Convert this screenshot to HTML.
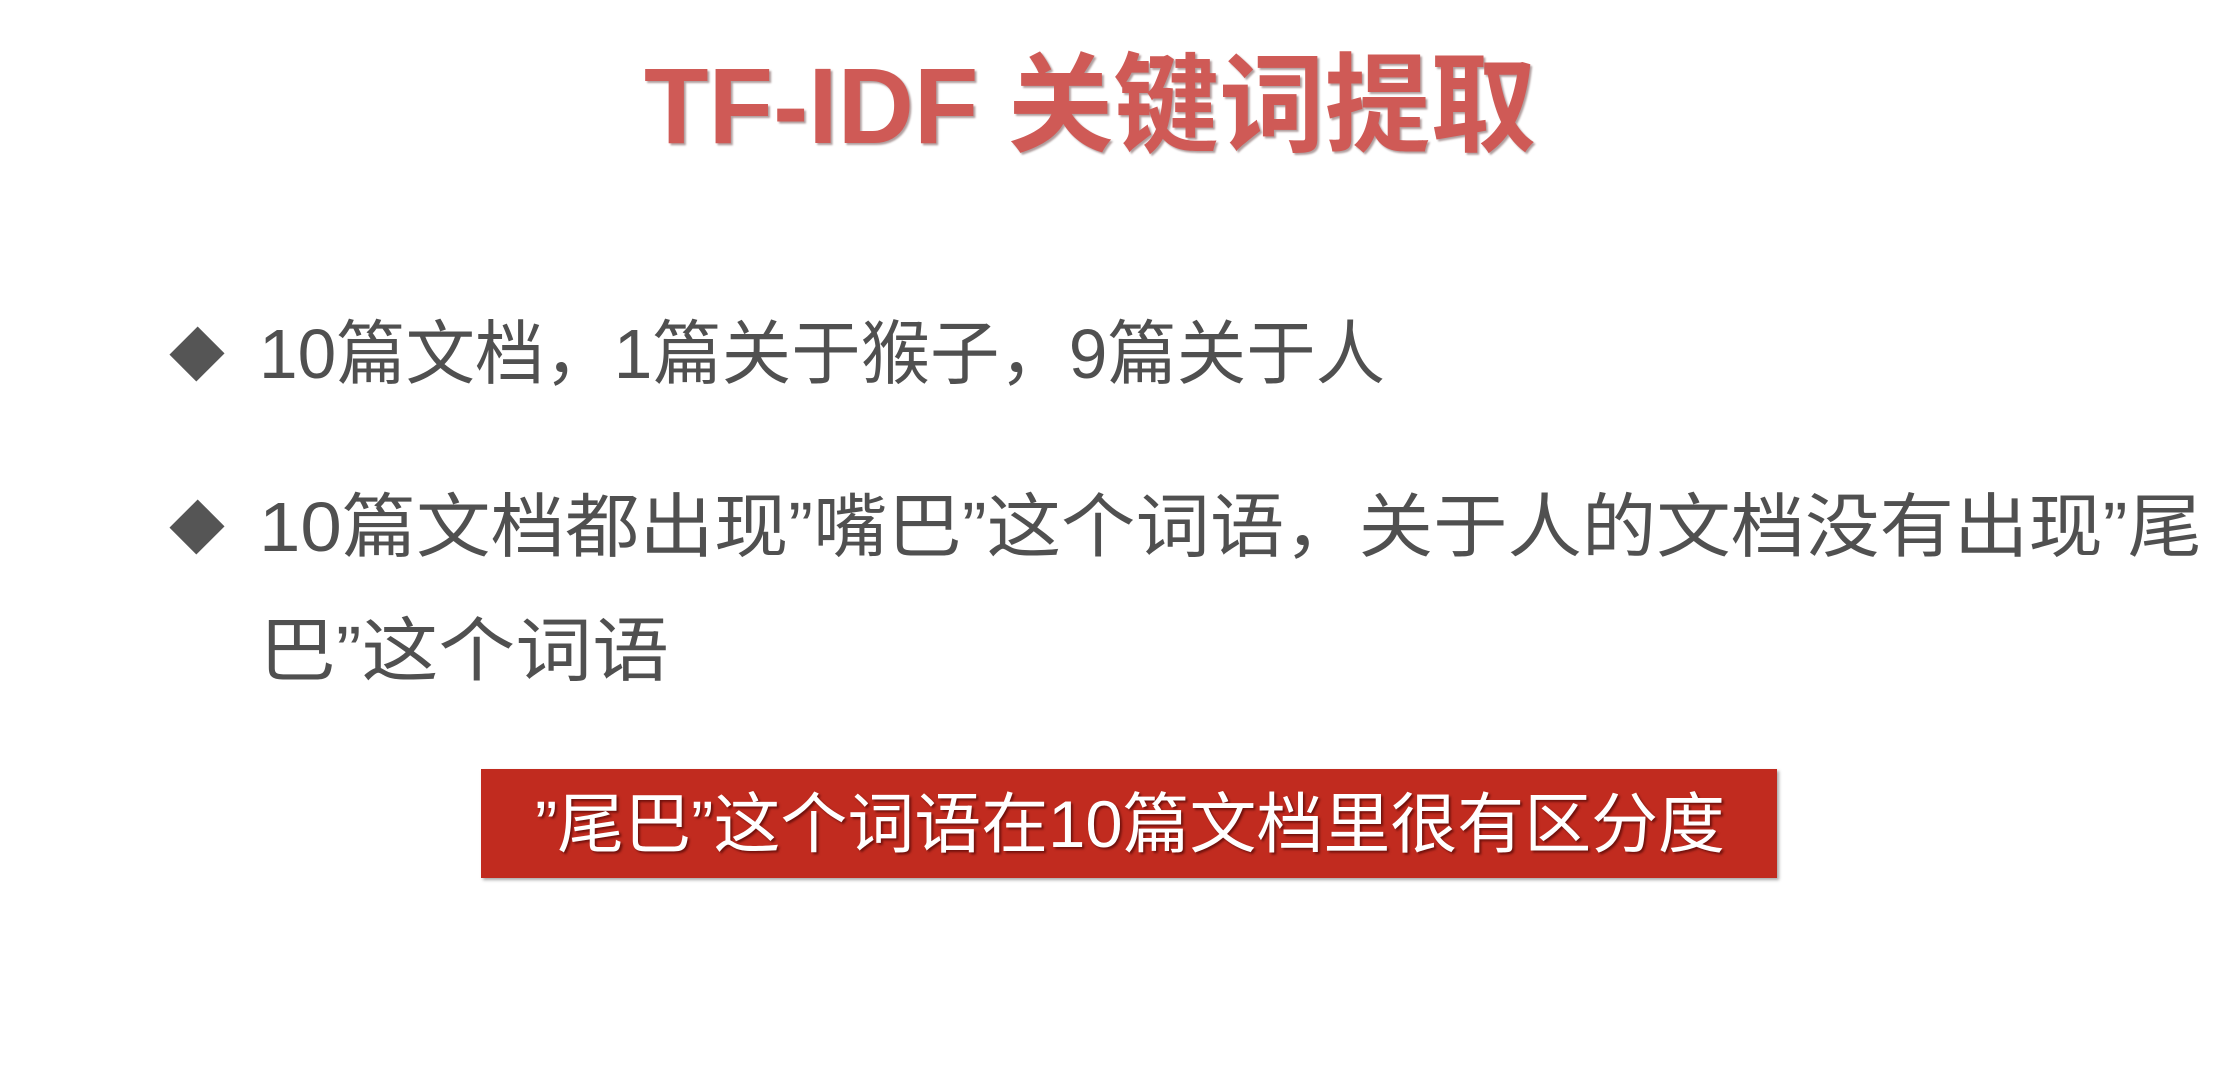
<!DOCTYPE html>
<html><head><meta charset="utf-8"><style>
html,body{margin:0;padding:0;background:#fff;}
body{width:2220px;height:1066px;position:relative;overflow:hidden;font-family:"Liberation Sans","Noto Sans CJK SC",sans-serif;}
.l{position:absolute;white-space:nowrap;transform-origin:0 50%;line-height:1;}
.t{color:#cf5a56;font-weight:bold;font-size:108px;text-shadow:2px 2px 2px rgba(80,40,40,.45);}
.b{color:#505050;font-size:70px;}
.d{position:absolute;width:38px;height:38px;background:#555;transform:rotate(45deg);}
.box{position:absolute;left:481px;top:769px;width:1296px;height:109px;background:#c12b1f;box-shadow:2px 2px 3px rgba(0,0,0,.35);}
.w{color:#fff;font-size:66px;text-shadow:2px 2px 2px rgba(60,0,0,.6);}
</style></head><body>
<div class="l t" data-x="644" data-w="892" data-y="106">TF-IDF 关键词提取</div>
<div class="d" style="left:178px;top:335px;transform:rotate(45deg) scale(1,1.05)"></div>
<div class="d" style="left:178px;top:508px;transform:rotate(45deg) scale(1,1.05)"></div>
<div class="l b" data-x="259" data-w="1126" data-y="354">10篇文档，1篇关于猴子，9篇关于人</div>
<div class="l b" data-x="259" data-w="1943" data-y="527">10篇文档都出现”嘴巴”这个词语，关于人的文档没有出现”尾</div>
<div class="l b" data-x="259" data-w="410" data-y="651">巴”这个词语</div>
<div class="box"></div>
<div class="l w" data-x="535" data-w="1190" data-y="824">”尾巴”这个词语在10篇文档里很有区分度</div>
<script>
document.querySelectorAll('.l').forEach(function(e){
  var r=e.getBoundingClientRect();
  var tw=+e.dataset.w, x=+e.dataset.x, y=+e.dataset.y;
  e.style.left=x+'px';
  e.style.top=(y-r.height/2)+'px';
  e.style.transform='scaleX('+(tw/r.width)+')';
});
</script>
</body></html>
